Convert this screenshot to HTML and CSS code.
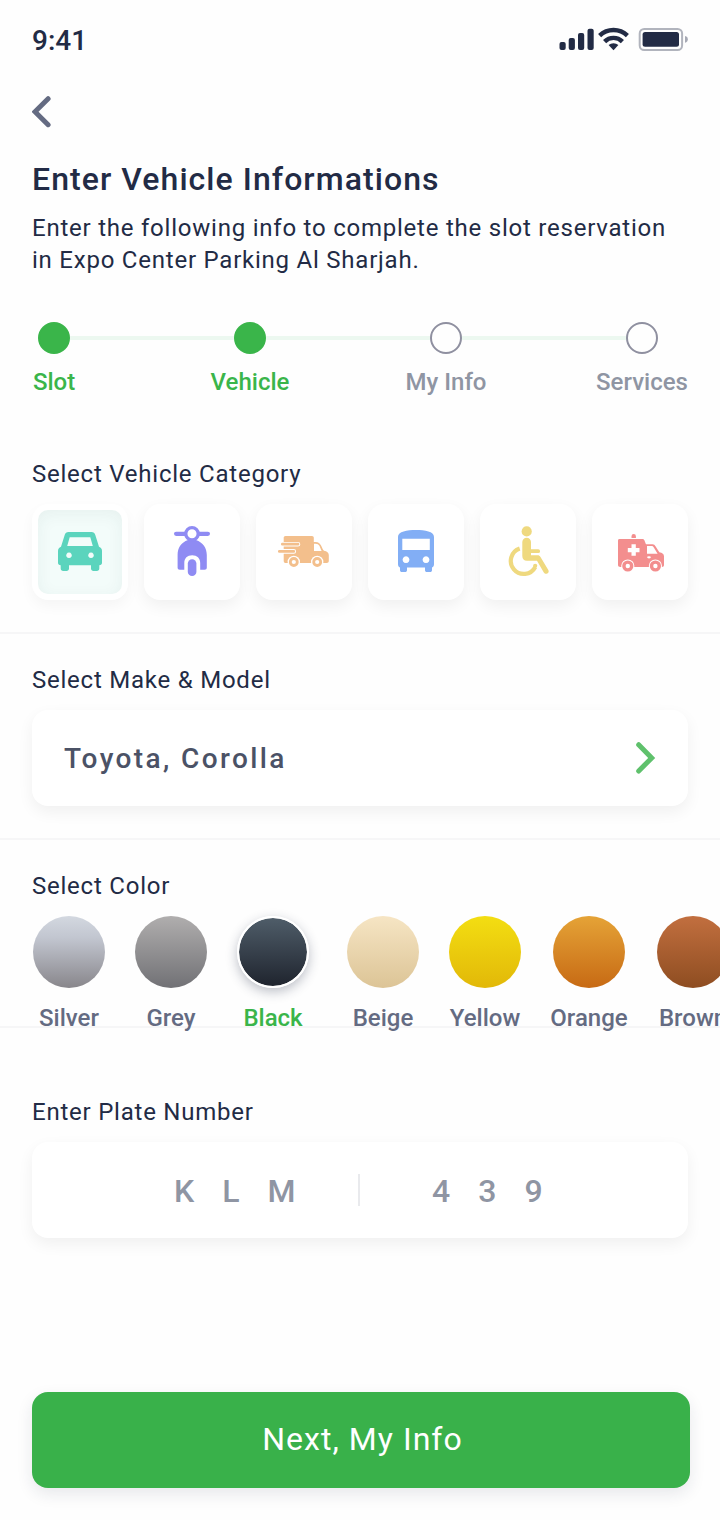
FILE: index.html
```html
<!DOCTYPE html>
<html lang="en">
<head>
<meta charset="utf-8">
<title>Enter Vehicle Informations</title>
<link rel="stylesheet" href="styles.css">
</head>
<body>
<main class="screen">
  <div class="status">
    <span class="time">9:41</span>
    <svg class="status-icons" width="129" height="24" viewBox="0 0 129 24">
      <g fill="#222b45">
        <rect x="0.5" y="15" width="6.2" height="8" rx="2"/>
        <rect x="9.7" y="11" width="6.2" height="12" rx="2"/>
        <rect x="19" y="6" width="6.2" height="17" rx="2"/>
        <rect x="28.5" y="1.7" width="6.2" height="21.3" rx="2"/>
        <path d="M49.6 18 a7.4 7.4 0 0 1 9.8 0 L54.5 23.2 Z"/>
      </g>
      <g fill="none" stroke="#222b45" stroke-width="4.4">
        <path d="M40.6 8.6 A20 20 0 0 1 68.4 8.6"/>
        <path d="M45.6 14.6 A12.5 12.5 0 0 1 63.4 14.6"/>
      </g>
      <rect x="80.7" y="2" width="42.4" height="21" rx="4.5" fill="none" stroke="#222b45" stroke-opacity=".35" stroke-width="2"/>
      <rect x="83.6" y="5" width="36.4" height="14.8" rx="2.5" fill="#222b45"/>
      <path d="M126 9 a3.4 3.4 0 0 1 0 6.7 Z" fill="#222b45" fill-opacity=".4"/>
    </svg>
  </div>

  <nav class="back">
    <svg width="20" height="32" viewBox="0 0 20 32"><path d="M16.1 2.7 L3 15.7 L16.1 28.7" fill="none" stroke="#646b82" stroke-width="5" stroke-linecap="round" stroke-linejoin="miter"/></svg>
  </nav>

  <header class="intro">
    <h1>Enter Vehicle Informations</h1>
    <p>Enter the following info to complete the slot reservation<br>in Expo Center Parking Al Sharjah.</p>
  </header>

  <ol class="steps">
    <li class="step done"><i class="dot"></i><span>Slot</span></li>
    <li class="bar"></li>
    <li class="step done"><i class="dot"></i><span>Vehicle</span></li>
    <li class="bar"></li>
    <li class="step"><i class="dot"></i><span>My Info</span></li>
    <li class="bar"></li>
    <li class="step"><i class="dot"></i><span>Services</span></li>
  </ol>

  <section class="block category">
    <h2>Select Vehicle Category</h2>
    <div class="tiles">
      <button class="tile selected" aria-label="Car">
        <svg viewBox="0 0 96 96"><path fill="#5bd4bd" fill-rule="evenodd" d="M36.5 28 H59.5 C61.5 28 62.8 29 63.3 31 L67 42.8 C69 43.6 70 45 70 47 V59 C70 60 69 61 67.3 61.3 V64.5 C67.3 66 66.3 67 64.8 67 H61.5 C60 67 59 66 59 64.5 V61.3 H37 V64.5 C37 66 36 67 34.5 67 H31.2 C29.7 67 28.7 66 28.7 64.5 V61.3 C27 61 26 60 26 59 V47 C26 45 27 43.6 29 42.8 L32.7 31 C33.2 29 34.5 28 36.5 28 Z M37.7 33.2 L35.2 42 H60.8 L58.3 33.2 Z M37 48.5 a2.8 2.8 0 1 0 0.01 0 Z M59 48.5 a2.8 2.8 0 1 0 0.01 0 Z"/></svg>
      </button>
      <button class="tile" aria-label="Motorcycle">
        <svg viewBox="0 0 96 96"><g fill="#8f8bf3"><rect x="30" y="27.7" width="36" height="4.2" rx="2.1"/><path d="M44 36 H52 C59 38.5 62.8 44 62.8 51 V63.8 C62.8 65 62 65.8 60.6 65.8 H56.2 V59 C56.2 54 53 51.2 48.2 51.2 C43.3 51.2 40.3 54 40.3 59 V65.8 H35.8 C34.4 65.8 33.6 65 33.6 63.8 V51 C33.6 44 37 38.5 44 36 Z"/><rect x="43.8" y="55.2" width="8.6" height="16.8" rx="4.3"/></g><circle cx="48" cy="29.8" r="6.2" fill="#fff" stroke="#8f8bf3" stroke-width="3.3"/></svg>
      </button>
      <button class="tile" aria-label="Delivery van">
        <svg viewBox="0 0 96 96"><path fill="#f3bf8c" fill-rule="evenodd" d="M29.5 32 H56 C57 32 57.8 32.8 57.8 33.8 V38 H59.5 C65.5 38 65.5 44.5 68 46.8 C71 47.4 72.8 48.7 72.8 51 V57 C72.8 58.3 72 59 70.7 59 H29.5 C28.4 59 27.7 58.2 27.7 57 V33.8 C27.7 32.8 28.4 32 29.5 32 Z M58 39.8 V47 H65.6 C63.9 43 63.5 39.8 59.5 39.8 Z"/><g fill="none" stroke-linecap="round"><path stroke="#fff" stroke-width="4.6" d="M27 40.2 H42 M24 47.4 H37.8"/><path stroke="#f3bf8c" stroke-width="2.7" d="M26.3 40.2 H42 M23.3 47.4 H37.8"/></g><circle cx="37.8" cy="58" r="6.2" fill="#fff"/><circle cx="61.2" cy="58" r="6.2" fill="#fff"/><g fill="#fff" stroke="#f3bf8c" stroke-width="2.8"><circle cx="37.8" cy="58" r="3.5"/><circle cx="61.2" cy="58" r="3.5"/></g></svg>
      </button>
      <button class="tile" aria-label="Bus">
        <svg viewBox="0 0 96 96"><path fill="#82aef5" fill-rule="evenodd" d="M30 33 C30 27.5 39 26 48 26 C57 26 66 27.5 66 33 V60 C66 62 65.4 63 64 63.4 V66 C64 67.4 63.3 68 62 68 H59 C57.7 68 57 67.4 57 66 V63.4 H39 V66 C39 67.4 38.3 68 37 68 H34 C32.7 68 32 67.4 32 66 V63.4 C30.6 63 30 62 30 60 Z M34.3 34.8 V46 H61.8 V34.8 Z M38 52.3 a3.4 3.4 0 1 0 0.01 0 Z M58 52.3 a3.4 3.4 0 1 0 0.01 0 Z"/></svg>
      </button>
      <button class="tile" aria-label="Accessible">
        <svg viewBox="0 0 96 96"><circle cx="46.7" cy="27.4" r="5.1" fill="#efd97f"/><path fill="#efd97f" d="M42.3 38 a4.3 4.3 0 0 1 8.7 0 V45.3 H58.2 a1.9 1.9 0 0 1 0 3.8 H51 V51.3 H57.5 C59 51.3 59.8 51.8 60.5 53 L68.3 66 C70 69.2 65.5 71.3 63.8 68.6 L57 56.8 H47 C44 56.8 42.3 55 42.3 52 Z"/><path fill="none" stroke="#efd97f" stroke-width="4.2" d="M39.7 44.6 A13 13 0 1 0 55.3 63"/><circle cx="55.2" cy="61.8" r="2.1" fill="#efd97f"/></svg>
      </button>
      <button class="tile" aria-label="Ambulance">
        <svg viewBox="0 0 96 96"><path fill="#f38e8e" fill-rule="evenodd" d="M27.5 35 H50.5 C52.5 35 52.8 37.5 54 40.3 H60.5 C62 40.3 62.8 41 63.5 42.3 L67.3 48.3 C70.5 49 72 50 72 52.5 V61 C72 62.3 71.3 63 70 63 H28.5 C26.8 63 26 62.3 26 61 V36.7 C26 35.5 26.5 35 27.5 35 Z M55 42 V49.8 H65.6 L61.8 43.5 C61 42.3 60.5 42 59.5 42 Z M39.5 40.3 V44 H35.8 V48.2 H39.5 V51.8 H43.8 V48.2 H47.5 V44 H43.8 V40.3 Z"/><path fill="#f38e8e" d="M39.5 34 V32.2 a2.2 2.2 0 0 1 4.4 0 V34 Z"/><ellipse cx="57" cy="53.3" rx="1.9" ry="1.1" fill="#fff"/><circle cx="35.8" cy="62" r="6.6" fill="#fff"/><circle cx="63.4" cy="62" r="6.6" fill="#fff"/><g fill="#fff" stroke="#f38e8e" stroke-width="3.4"><circle cx="35.8" cy="62" r="3.9"/><circle cx="63.4" cy="62" r="3.9"/></g></svg>
      </button>
    </div>
  </section>

  <section class="block model">
    <h2>Select Make &amp; Model</h2>
    <div class="card model-card">
      <span>Toyota, Corolla</span>
      <svg width="20" height="32" viewBox="0 0 20 32"><path d="M2.7 2.7 L15.7 15.9 L2.7 29" fill="none" stroke="#5fc16c" stroke-width="5" stroke-linecap="round"/></svg>
    </div>
  </section>

  <section class="block color">
    <h2>Select Color</h2>
    <div class="swatches">
      <div class="swatch"><i class="silver"></i><span>Silver</span></div>
      <div class="swatch"><i class="grey"></i><span>Grey</span></div>
      <div class="swatch chosen"><i class="black"></i><span>Black</span></div>
      <div class="swatch"><i class="beige"></i><span>Beige</span></div>
      <div class="swatch wide"><i class="yellow"></i><span>Yellow</span></div>
      <div class="swatch wide"><i class="orange"></i><span>Orange</span></div>
      <div class="swatch"><i class="brown"></i><span>Brown</span></div>
    </div>
  </section>

  <section class="plate">
    <h2>Enter Plate Number</h2>
    <div class="card plate-card">
      <span class="letters"><b>K</b><b>L</b><b>M</b></span>
      <span class="digits"><b>4</b><b>3</b><b>9</b></span>
    </div>
  </section>

  <button class="next">Next, My Info</button>
</main>
</body>
</html>
```
FILE: styles.css
```css
* { box-sizing: border-box; margin: 0; padding: 0; }
body { background: #fefefe; font-family: Roboto, "Liberation Sans", sans-serif; color: #222b45; }
button { border: 0; font: inherit; }
i { display: block; }
svg { display: block; }

.screen { width: 720px; height: 1520px; overflow: hidden; display: flex; flex-direction: column; }

.status { height: 80px; padding: 0 32px; display: flex; justify-content: space-between; align-items: center; }
.time { padding-top: 2px; font-size: 28px; font-weight: 500; line-height: 32px; }
.status-icons { margin-bottom: 2px; }

.back { height: 64px; padding: 16px 32px; }

.intro { padding: 15px 32px 0; }
h1 { font-size: 32px; line-height: 40px; font-weight: 500; letter-spacing: 1.06px; }
.intro p { margin-top: 13px; font-size: 24px; line-height: 32px; letter-spacing: .77px; white-space: nowrap; }

.steps { list-style: none; display: flex; margin-top: 46px; padding: 0 62px 0 38px; height: 76px; }
.step { width: 32px; display: flex; flex-direction: column; align-items: center; gap: 12px; color: #8f95a3; }
.step span { font-size: 24px; line-height: 32px; font-weight: 500; white-space: nowrap; }
.dot { width: 32px; height: 32px; flex: none; border-radius: 50%; border: 2px solid #8f90a0; }
.done { color: #3ab54a; }
.done .dot { background: #3ab54a; border-color: #3ab54a; }
.bar { flex: 1; height: 4px; margin-top: 14px; background: #ecf8f0; }

h2 { font-size: 24px; line-height: 32px; font-weight: 400; letter-spacing: .77px; }
.block { padding: 30px 32px 32px; border-bottom: 2px solid #f6f6f7; height: 206px; flex: none; }
.category { padding-top: 60px; height: 236px; }
.card, .tile { background: #fff; border-radius: 16px; box-shadow: 0 6px 16px rgba(0, 0, 0, .06); }
.tiles { display: flex; gap: 16px; margin-top: 14px; }
.tile { width: 96px; height: 96px; position: relative; }
.tile svg { width: 96px; height: 96px; position: relative; }
.selected::before { content: ""; position: absolute; inset: 6px; border-radius: 10px; background: #f3fcfa; box-shadow: inset 0 4px 16px rgba(34, 70, 60, .06); }
.selected { box-shadow: 0 6px 14px rgba(0, 0, 0, .04); }

.card { height: 96px; margin-top: 14px; display: flex; align-items: center; }
.model-card { justify-content: space-between; padding: 0 32px; font-size: 28px; font-weight: 500; letter-spacing: 2.4px; color: #4b5266; }

.color { height: 188px; padding-bottom: 0; }
.swatches { display: flex; gap: 30px; margin: 14px 0 0 1px; }
.swatch { width: 72px; flex: none; display: flex; flex-direction: column; align-items: center; gap: 14px; color: #646b82; }
.swatch i { width: 72px; height: 72px; border-radius: 50%; }
.swatch span { font-size: 24px; line-height: 32px; font-weight: 500; white-space: nowrap; }
.chosen { color: #3ab54a; margin-right: 8px; }
.chosen i { border: 2px solid #fff; box-shadow: 0 4px 12px rgba(34, 43, 69, .3); }
.wide { margin-right: 2px; }
.silver { background: linear-gradient(#d3d8e0, #c2c6d0 30%, #88868b); }
.grey { background: linear-gradient(#b0aeae, #717175); }
.black { background: linear-gradient(#4f5d69, #1f242e) padding-box; }
.beige { background: linear-gradient(#f6e5c4, #dcc496); }
.yellow { background: linear-gradient(#f3de12, #e2b808); }
.orange { background: linear-gradient(#e5a337, #c76a14); }
.brown { background: linear-gradient(#c26f3f, #8e4d21); }

.plate { padding: 68px 32px 0; }
.plate-card { color: #8f95a3; }
.letters, .digits { width: 50%; height: 32px; display: flex; line-height: 34px; font-size: 32px; }
.letters { padding-left: 142px; gap: 28px; border-right: 2px solid #e9eaed; }
.digits { padding-left: 72px; gap: 28px; }
.plate b { font-weight: 500; }

.next { width: 658px; height: 96px; flex: none; margin: 154px 0 0 32px; padding: 0 0 2px 3px; border-radius: 16px; background: #39b14a; color: #fff; font-size: 32px; letter-spacing: 1.03px; box-shadow: 0 6px 16px rgba(34, 43, 69, .1); }
```
